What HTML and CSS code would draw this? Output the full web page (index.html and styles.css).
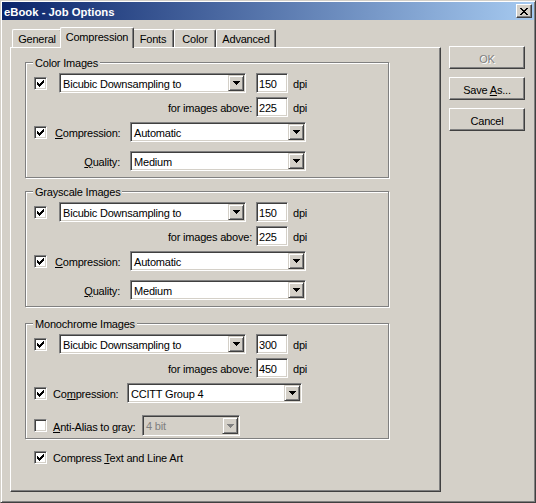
FILE: index.html
```html
<!DOCTYPE html>
<html>
<head>
<meta charset="utf-8">
<link rel="stylesheet" href="styles.css">
</head>
<body>
<div class="window">
  <div class="titlebar">
    <span class="title">eBook - Job Options</span>
    <span class="close"><svg width="8" height="7" viewBox="0 0 8 7"><path d="M0 0h2v1H0zM6 0h2v1H6zM1 1h2v1H1zM5 1h2v1H5zM2 2h4v1H2zM3 3h2v1H3zM2 4h4v1H2zM1 5h2v1H1zM5 5h2v1H5zM0 6h2v1H0zM6 6h2v1H6z"/></svg></span>
  </div>
  <div class="client">
    <div class="tabs-col">
      <div class="tabstrip">
        <div class="tab t-general">General</div>
        <div class="tab sel t-comp">Compression</div>
        <div class="tab t-fonts">Fonts</div>
        <div class="tab t-color">Color</div>
        <div class="tab t-adv">Advanced</div>
      </div>
      <div class="panel">
        <fieldset class="group g1">
          <legend>Color Images</legend>
          <div class="row r1">
            <span class="cb on"><svg width="7" height="7" viewBox="0 0 7 7"><path d="M0 2h1v3H0zM1 3h1v3H1zM2 4h1v3H2zM3 3h1v3H3zM4 2h1v3H4zM5 1h1v3H5zM6 0h1v3H6z"/></svg></span>
            <span class="combo w-ds"><span class="val">Bicubic Downsampling to</span><span class="drop"><svg width="7" height="4" viewBox="0 0 7 4"><path d="M0 0h7v1H0zM1 1h5v1H1zM2 2h3v1H2zM3 3h1v1H3z"/></svg></span></span>
            <span class="edit">150</span>
            <span class="unit">dpi</span>
          </div>
          <div class="row r2">
            <span class="lbl-above">for images above:</span>
            <span class="edit e2">225</span>
            <span class="unit">dpi</span>
          </div>
          <div class="row r3">
            <span class="cb on"><svg width="7" height="7" viewBox="0 0 7 7"><path d="M0 2h1v3H0zM1 3h1v3H1zM2 4h1v3H2zM3 3h1v3H3zM4 2h1v3H4zM5 1h1v3H5zM6 0h1v3H6z"/></svg></span>
            <span class="lbl-comp"><u>C</u>ompression:</span>
            <span class="combo w-c"><span class="val">Automatic</span><span class="drop"><svg width="7" height="4" viewBox="0 0 7 4"><path d="M0 0h7v1H0zM1 1h5v1H1zM2 2h3v1H2zM3 3h1v1H3z"/></svg></span></span>
          </div>
          <div class="row r4">
            <span class="lbl-q"><u>Q</u>uality:</span>
            <span class="combo w-c q"><span class="val">Medium</span><span class="drop"><svg width="7" height="4" viewBox="0 0 7 4"><path d="M0 0h7v1H0zM1 1h5v1H1zM2 2h3v1H2zM3 3h1v1H3z"/></svg></span></span>
          </div>
        </fieldset>

        <fieldset class="group g2">
          <legend>Grayscale Images</legend>
          <div class="row r1">
            <span class="cb on"><svg width="7" height="7" viewBox="0 0 7 7"><path d="M0 2h1v3H0zM1 3h1v3H1zM2 4h1v3H2zM3 3h1v3H3zM4 2h1v3H4zM5 1h1v3H5zM6 0h1v3H6z"/></svg></span>
            <span class="combo w-ds"><span class="val">Bicubic Downsampling to</span><span class="drop"><svg width="7" height="4" viewBox="0 0 7 4"><path d="M0 0h7v1H0zM1 1h5v1H1zM2 2h3v1H2zM3 3h1v1H3z"/></svg></span></span>
            <span class="edit">150</span>
            <span class="unit">dpi</span>
          </div>
          <div class="row r2">
            <span class="lbl-above">for images above:</span>
            <span class="edit e2">225</span>
            <span class="unit">dpi</span>
          </div>
          <div class="row r3">
            <span class="cb on"><svg width="7" height="7" viewBox="0 0 7 7"><path d="M0 2h1v3H0zM1 3h1v3H1zM2 4h1v3H2zM3 3h1v3H3zM4 2h1v3H4zM5 1h1v3H5zM6 0h1v3H6z"/></svg></span>
            <span class="lbl-comp"><u>C</u>ompression:</span>
            <span class="combo w-c"><span class="val">Automatic</span><span class="drop"><svg width="7" height="4" viewBox="0 0 7 4"><path d="M0 0h7v1H0zM1 1h5v1H1zM2 2h3v1H2zM3 3h1v1H3z"/></svg></span></span>
          </div>
          <div class="row r4">
            <span class="lbl-q"><u>Q</u>uality:</span>
            <span class="combo w-c q"><span class="val">Medium</span><span class="drop"><svg width="7" height="4" viewBox="0 0 7 4"><path d="M0 0h7v1H0zM1 1h5v1H1zM2 2h3v1H2zM3 3h1v1H3z"/></svg></span></span>
          </div>
        </fieldset>

        <fieldset class="group g3">
          <legend>Monochrome Images</legend>
          <div class="row r1">
            <span class="cb on"><svg width="7" height="7" viewBox="0 0 7 7"><path d="M0 2h1v3H0zM1 3h1v3H1zM2 4h1v3H2zM3 3h1v3H3zM4 2h1v3H4zM5 1h1v3H5zM6 0h1v3H6z"/></svg></span>
            <span class="combo w-ds"><span class="val">Bicubic Downsampling to</span><span class="drop"><svg width="7" height="4" viewBox="0 0 7 4"><path d="M0 0h7v1H0zM1 1h5v1H1zM2 2h3v1H2zM3 3h1v1H3z"/></svg></span></span>
            <span class="edit">300</span>
            <span class="unit">dpi</span>
          </div>
          <div class="row r2">
            <span class="lbl-above">for images above:</span>
            <span class="edit e2">450</span>
            <span class="unit">dpi</span>
          </div>
          <div class="row r3">
            <span class="cb on"><svg width="7" height="7" viewBox="0 0 7 7"><path d="M0 2h1v3H0zM1 3h1v3H1zM2 4h1v3H2zM3 3h1v3H3zM4 2h1v3H4zM5 1h1v3H5zM6 0h1v3H6z"/></svg></span>
            <span class="lbl-mcomp">Co<u>m</u>pression:</span>
            <span class="combo w-mc"><span class="val">CCITT Group 4</span><span class="drop"><svg width="7" height="4" viewBox="0 0 7 4"><path d="M0 0h7v1H0zM1 1h5v1H1zM2 2h3v1H2zM3 3h1v1H3z"/></svg></span></span>
          </div>
          <div class="row r4m">
            <span class="cb"></span>
            <span class="lbl-aa"><u>A</u>nti-Alias to gray:</span>
            <span class="combo w-aa disabled"><span class="val">4 bit</span><span class="drop"><svg width="7" height="4" viewBox="0 0 7 4"><path d="M0 0h7v1H0zM1 1h5v1H1zM2 2h3v1H2zM3 3h1v1H3z"/></svg></span></span>
          </div>
        </fieldset>

        <div class="row final">
          <span class="cb on"><svg width="7" height="7" viewBox="0 0 7 7"><path d="M0 2h1v3H0zM1 3h1v3H1zM2 4h1v3H2zM3 3h1v3H3zM4 2h1v3H4zM5 1h1v3H5zM6 0h1v3H6z"/></svg></span>
          <span class="lbl-final">Compress <u>T</u>ext and Line Art</span>
        </div>
      </div>
    </div>
    <div class="buttons">
      <div class="btn disabled-btn"><span>OK</span></div>
      <div class="btn"><span>Save <u>A</u>s...</span></div>
      <div class="btn"><span>Cancel</span></div>
    </div>
  </div>
</div>
</body>
</html>
```

FILE: styles.css
```css
html, body {
  margin: 0;
  padding: 0;
  background: #d4d0c8;
}
body {
  font-family: "Liberation Sans", Arial, sans-serif;
  font-size: 11px;
  letter-spacing: -0.2px;
  color: #000;
}
svg {
  display: block;
  shape-rendering: crispEdges;
  fill: #000;
}
u { text-decoration: underline; text-underline-offset: 1px; }

.window {
  box-sizing: border-box;
  width: 536px;
  height: 503px;
  background: #d4d0c8;
  border: 1px solid;
  border-color: #d4d0c8 #404040 #404040 #d4d0c8;
  box-shadow: inset 1px 1px #fff, inset -1px -1px #808080;
  padding: 1px;
  display: flex;
  flex-direction: column;
}

.titlebar {
  height: 18px;
  flex: none;
  background: linear-gradient(to right, #0a246a, #a6caf0);
  display: flex;
  align-items: center;
  justify-content: space-between;
  padding: 0 2px 0 2px;
}
.title {
  color: #fff;
  font-weight: bold;
  font-size: 11.3px;
  line-height: 18px;
  padding-top: 1px;
  letter-spacing: 0;
}
.close {
  box-sizing: border-box;
  width: 16px;
  height: 14px;
  background: #d4d0c8;
  border: 1px solid;
  border-color: #fff #404040 #404040 #fff;
  box-shadow: inset -1px -1px #808080;
  display: flex;
  align-items: center;
  justify-content: center;
}

.client {
  display: flex;
  flex: 1;
}
.tabs-col {
  margin: 7px 0 0 8px;
  width: 431px;
}
.tabstrip {
  height: 20px;
  display: flex;
  align-items: flex-end;
  padding-left: 2px;
}
.tab {
  box-sizing: border-box;
  height: 18px;
  border: 1px solid #fff;
  border-bottom: none;
  border-right-color: #404040;
  box-shadow: inset -1px 0 #808080;
  border-radius: 2px 2px 0 0;
  text-align: center;
  padding-top: 3px;
  line-height: 13px;
  background: #d4d0c8;
}
.tab.sel {
  height: 21px;
  margin: 0 -2px -1px;
  position: relative;
  z-index: 1;
}
.t-general { width: 50px; }
.t-comp { width: 74px; }
.t-fonts { width: 42px; }
.t-color { width: 42px; }
.t-adv { width: 60px; }

.panel {
  box-sizing: border-box;
  height: 445px;
  border: 1px solid;
  border-color: #fff #404040 #404040 #fff;
  box-shadow: inset -1px -1px #808080;
  padding: 0;
}

.group {
  box-sizing: border-box;
  width: 364px;
  min-width: 0;
  margin: 0 0 0 14px;
  padding: 0 0 6px 0;
  border: 1px solid #808080;
  box-shadow: inset 1px 1px #fff, 1px 1px #fff;
}
.group legend {
  padding: 1px 2px 0;
  margin-left: 7px;
  line-height: 12px;
  background: #d4d0c8;
}
.g1 { margin-top: 8px; }
.g2 { margin-top: 7px; }
.g3 { margin-top: 10px; padding-bottom: 2px; }

.row {
  display: flex;
  align-items: center;
  height: 20px;
}
.r1 { margin-top: 4px; }
.r2 { margin-top: 4px; }
.r3 { margin-top: 5px; }
.r4 { margin-top: 9px; }
.r4m { margin-top: 12px; height: 21px; }

.cb {
  box-sizing: border-box;
  width: 13px;
  height: 13px;
  flex: none;
  margin-left: 8px;
  background: #fff;
  border: 1px solid;
  border-color: #808080 #fff #fff #808080;
  box-shadow: inset 1px 1px #404040, inset -1px -1px #d4d0c8;
  display: flex;
  align-items: center;
  justify-content: center;
}

.combo {
  box-sizing: border-box;
  height: 20px;
  flex: none;
  display: flex;
  background: #fff;
  border: 1px solid;
  border-color: #808080 #fff #fff #808080;
  box-shadow: inset 1px 1px #404040, inset -1px -1px #d4d0c8;
  padding: 1px;
}
.r4m .combo { height: 21px; }
.combo .val {
  flex: 1;
  padding-left: 2px;
  line-height: 18px;
  white-space: nowrap;
  overflow: hidden;
}
.drop {
  box-sizing: border-box;
  width: 16px;
  flex: none;
  background: #d4d0c8;
  border: 1px solid;
  border-color: #d4d0c8 #404040 #404040 #d4d0c8;
  box-shadow: inset 1px 1px #fff, inset -1px -1px #808080;
  display: flex;
  align-items: center;
  justify-content: center;
}
.combo.disabled {
  background: #d4d0c8;
  color: #808080;
}
.combo.disabled svg { fill: #808080; }

.w-ds { width: 187px; margin-left: 12px; }
.w-c { width: 176px; }
.w-c.q { margin-left: 10px; }
.w-mc { width: 175px; }
.w-aa { width: 98px; }

.edit {
  box-sizing: border-box;
  width: 32px;
  height: 20px;
  flex: none;
  margin-left: 10px;
  background: #fff;
  border: 1px solid;
  border-color: #808080 #fff #fff #808080;
  box-shadow: inset 1px 1px #404040, inset -1px -1px #d4d0c8;
  padding: 1px 0 0 2px;
  line-height: 18px;
  overflow: hidden;
}
.edit.e2 { margin-left: 4px; }
.unit { margin-left: 5px; padding-top: 2px; }

.lbl-above, .lbl-comp, .lbl-q, .lbl-mcomp, .lbl-aa, .lbl-final {
  padding-top: 2px;
}
.lbl-above {
  width: 226px;
  text-align: right;
  flex: none;
}
.lbl-comp {
  width: 75px;
  margin-left: 8px;
  flex: none;
}
.lbl-q {
  width: 94px;
  text-align: right;
  flex: none;
}
.lbl-mcomp {
  width: 74px;
  margin-left: 6px;
  flex: none;
}
.lbl-aa {
  width: 89px;
  margin-left: 6px;
  flex: none;
}

.final { margin-top: 8px; }
.final .cb { margin-left: 23px; }
.lbl-final { margin-left: 6px; }

.buttons {
  margin: 26px 0 0 8px;
  display: flex;
  flex-direction: column;
  gap: 8px;
}
.btn {
  box-sizing: border-box;
  width: 76px;
  height: 23px;
  border: 1px solid;
  border-color: #fff #404040 #404040 #fff;
  box-shadow: inset -1px -1px #808080;
  display: flex;
  align-items: center;
  justify-content: center;
  padding-top: 2px;
}
.disabled-btn {
  color: #808080;
  text-shadow: 1px 1px #fff;
}
```
